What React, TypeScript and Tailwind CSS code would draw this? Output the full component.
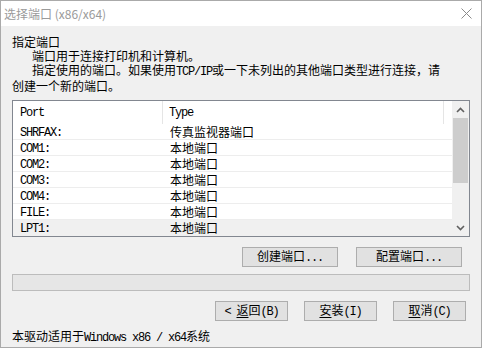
import React from 'react';

const M: React.FC<{ children: React.ReactNode }> = ({ children }) => (
  <span className="font-['Liberation_Mono',monospace] text-[12px] tracking-[-1.2px]">{children}</span>
);

const ports = [
  { port: 'SHRFAX:', type: '传真监视器端口' },
  { port: 'COM1:', type: '本地端口' },
  { port: 'COM2:', type: '本地端口' },
  { port: 'COM3:', type: '本地端口' },
  { port: 'COM4:', type: '本地端口' },
  { port: 'FILE:', type: '本地端口' },
  { port: 'LPT1:', type: '本地端口' },
];

const Chevron: React.FC<{ down?: boolean }> = ({ down }) => (
  <svg width="9" height="6" viewBox="0 0 9 6" className={down ? 'rotate-180' : ''}>
    <path d="M1 5 L4.5 1.5 L8 5" fill="none" stroke="#606060" strokeWidth="1.6" />
  </svg>
);

export default function App() {
  return (
    <div className="w-[482px] h-[348px] border border-[#aaaaaa] bg-[#f0f0f0] flex flex-col font-['Noto_Sans_CJK_SC',sans-serif] text-[12px] text-black overflow-hidden">
      {/* title bar */}
      <div className="h-[25px] bg-white flex items-center justify-between pl-[3px] pr-[9px] shrink-0">
        <span className="text-[#9a9a9a] text-[12px] leading-none">选择端口 (x86/x64)</span>
        <svg width="11" height="11" viewBox="0 0 11 11">
          <path d="M0.5 0.5 L10.5 10.5 M10.5 0.5 L0.5 10.5" stroke="#8a8a8a" strokeWidth="1" />
        </svg>
      </div>

      <div className="flex flex-col px-[11px] pt-[9px]">
        <div className="leading-[14px]">
          <div>指定端口</div>
          <div className="pl-[20px]">端口用于连接打印机和计算机。</div>
          <div className="pl-[20px]">指定使用的端口。如果使用<M>TCP/IP</M>或一下未列出的其他端口类型进行连接，请</div>
          <div>创建一个新的端口。</div>
        </div>

        {/* port list */}
        <div className="mt-[7px] h-[137px] border border-[#828790] bg-white flex">
          <div className="flex-1 flex flex-col">
            <div className="h-[23px] flex items-center shrink-0">
              <div className="w-[150px] h-full flex items-center pl-[7px] border-r border-[#e5e5e5]"><M>Port</M></div>
              <div className="w-[281px] h-full flex items-center pl-[6px] border-r border-[#e5e5e5]"><M>Type</M></div>
            </div>
            {ports.map((p, i) => (
              <div
                key={p.port}
                className={`h-[16px] flex items-center border-b ${i === ports.length - 1 ? 'bg-[#f0f0f0] border-transparent' : 'border-[#ededed]'}`}
              >
                <div className="w-[150px] pl-[7px] leading-[15px]"><M>{p.port}</M></div>
                <div className="pl-[7px] leading-[15px]">{p.type}</div>
              </div>
            ))}
          </div>
          <div className="w-[17px] bg-[#f0f0f0] flex flex-col items-center">
            <div className="h-[17px] flex items-center justify-center"><Chevron /></div>
            <div className="w-[15px] h-[65px] bg-[#cdcdcd]" />
            <div className="flex-1" />
            <div className="h-[17px] flex items-center justify-center"><Chevron down /></div>
          </div>
        </div>

        {/* create / configure */}
        <div className="mt-[10px] flex justify-end gap-[18px] pr-[8px]">
          <button className="w-[96px] h-[20px] border border-[#adadad] bg-[#e1e1e1] flex items-center justify-center leading-none">
            <span>创建端口<M>...</M></span>
          </button>
          <button className="w-[106px] h-[20px] border border-[#adadad] bg-[#e1e1e1] flex items-center justify-center leading-none">
            <span>配置端口<M>...</M></span>
          </button>
        </div>

        {/* progress */}
        <div className="mt-[7px] h-[17px] border border-[#bcbcbc] bg-[#e6e6e6]" />

        {/* bottom buttons */}
        <div className="mt-[10px] flex justify-end gap-[16px] pr-[4px]">
          <button className="w-[73px] h-[20px] border border-[#adadad] bg-[#e1e1e1] flex items-center justify-center leading-none">
            <span><M>&lt;&nbsp;</M><span className="underline underline-offset-2">返</span>回<M>(B)</M></span>
          </button>
          <button className="w-[73px] h-[20px] border border-[#adadad] bg-[#e1e1e1] flex items-center justify-center leading-none">
            <span><span className="underline underline-offset-2">安</span>装<M>(I)</M></span>
          </button>
          <button className="w-[73px] h-[20px] border border-[#adadad] bg-[#e1e1e1] flex items-center justify-center leading-none">
            <span><span className="underline underline-offset-2">取</span>消<M>(C)</M></span>
          </button>
        </div>

        <div className="mt-[8px] leading-[14px]">
          本驱动适用于<M>Windows x86 / x64</M>系统
        </div>
      </div>
    </div>
  );
}
